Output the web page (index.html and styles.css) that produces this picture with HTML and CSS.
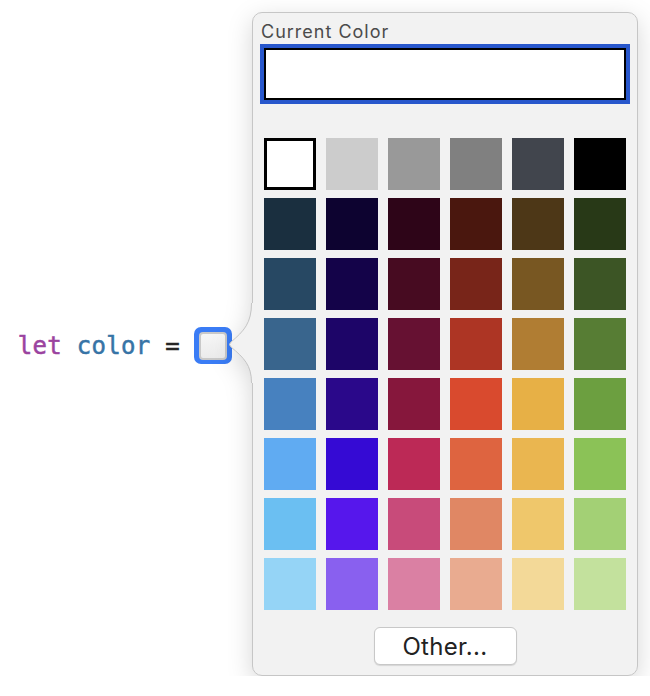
FILE: index.html
```html
<!DOCTYPE html>
<html>
<head>
<meta charset="utf-8">
<link rel="stylesheet" href="styles.css">
</head>
<body>
<div class="stage">
  <div class="code-line">
    <span class="code"><span class="kw">let</span> <span class="ident">color</span> <span class="op">=</span></span>
    <span class="literal"><span class="literal-inner"></span></span>
  </div>
  <div class="popover">
    <svg class="arrow" width="26" height="80" viewBox="0 0 26 80">
      <path d="M24 0 L24 0 C24 20 16 28 3 39 Q0 41.5 3 44 C16 55 24 62 24 80 L26 80 L26 0 Z" fill="#f2f2f2"/>
      <path d="M23.5 0 C23.5 20 16 28 3 39 Q0 41.5 3 44 C16 55 23.5 62 23.5 80" fill="none" stroke="#c4c4c4" stroke-width="1"/>
    </svg>
    <div class="title">Current Color</div>
    <div class="well"><div class="well-inner"></div></div>
    <div class="grid">
      <div class="sw selected" style="background:#ffffff"></div>
      <div class="sw" style="background:#cccccc"></div>
      <div class="sw" style="background:#999999"></div>
      <div class="sw" style="background:#808080"></div>
      <div class="sw" style="background:#41454d"></div>
      <div class="sw" style="background:#000000"></div>

      <div class="sw" style="background:#1a2f3f"></div>
      <div class="sw" style="background:#0d0330"></div>
      <div class="sw" style="background:#2e0518"></div>
      <div class="sw" style="background:#4a170e"></div>
      <div class="sw" style="background:#4d3717"></div>
      <div class="sw" style="background:#283917"></div>

      <div class="sw" style="background:#274863"></div>
      <div class="sw" style="background:#140349"></div>
      <div class="sw" style="background:#470b21"></div>
      <div class="sw" style="background:#782519"></div>
      <div class="sw" style="background:#785722"></div>
      <div class="sw" style="background:#3c5525"></div>

      <div class="sw" style="background:#39658d"></div>
      <div class="sw" style="background:#1d0568"></div>
      <div class="sw" style="background:#661132"></div>
      <div class="sw" style="background:#ad3524"></div>
      <div class="sw" style="background:#b07d33"></div>
      <div class="sw" style="background:#577d34"></div>

      <div class="sw" style="background:#4781bf"></div>
      <div class="sw" style="background:#2a088a"></div>
      <div class="sw" style="background:#86173c"></div>
      <div class="sw" style="background:#d94a2e"></div>
      <div class="sw" style="background:#e7b046"></div>
      <div class="sw" style="background:#6c9f40"></div>

      <div class="sw" style="background:#60abf2"></div>
      <div class="sw" style="background:#350ad4"></div>
      <div class="sw" style="background:#bc2956"></div>
      <div class="sw" style="background:#de6440"></div>
      <div class="sw" style="background:#eab650"></div>
      <div class="sw" style="background:#8bc257"></div>

      <div class="sw" style="background:#6bbff2"></div>
      <div class="sw" style="background:#5617ec"></div>
      <div class="sw" style="background:#c84b7a"></div>
      <div class="sw" style="background:#e08764"></div>
      <div class="sw" style="background:#efc76b"></div>
      <div class="sw" style="background:#a3d075"></div>

      <div class="sw" style="background:#95d4f6"></div>
      <div class="sw" style="background:#8960ef"></div>
      <div class="sw" style="background:#da80a3"></div>
      <div class="sw" style="background:#e9ab90"></div>
      <div class="sw" style="background:#f3d998"></div>
      <div class="sw" style="background:#c3e19d"></div>
    </div>
    <div class="footer"><button class="other">Other...</button></div>
  </div>
</div>
</body>
</html>
```

FILE: styles.css
```css
html, body {
  margin: 0;
  padding: 0;
  background: #ffffff;
}

.stage {
  display: flex;
  align-items: flex-start;
  padding: 11px 0 0 18px;
}

.code-line {
  display: flex;
  align-items: center;
  justify-content: flex-end;
  gap: 14px;
  width: 214px;
  margin-top: 316px;
  height: 37px;
}

.code {
  font-family: "DejaVu Sans Mono", "Liberation Mono", monospace;
  font-size: 24px;
  letter-spacing: 0.3px;
  color: #262626;
  white-space: pre;
  -webkit-text-stroke: 0.5px currentColor;
}

.kw { color: #9b439f; }
.ident { color: #3774a6; }
.op { color: #262626; }

.literal {
  box-sizing: border-box;
  width: 38px;
  height: 37px;
  border-radius: 7px;
  background: #3a7cf5;
  display: flex;
  align-items: center;
  justify-content: center;
  flex-shrink: 0;
}

.literal-inner {
  box-sizing: border-box;
  width: 28px;
  height: 28px;
  border-radius: 4px;
  border: 2px solid #c9c9c9;
  background: linear-gradient(#f6f6f6, #ececec);
}

.popover {
  position: relative;
  margin-left: 20px;
  margin-top: 1px;
  width: 362px;
  padding: 0 11px 10px 11px;
  background: #f2f2f2;
  border: 1px solid #c6c6c6;
  border-radius: 10px;
  filter: drop-shadow(0 7px 12px rgba(0, 0, 0, 0.16));
  font-family: "Inter", "Liberation Sans", sans-serif;
}

.arrow {
  position: absolute;
  left: -25px;
  top: 290px;
}

.title {
  font-size: 18px;
  letter-spacing: 1px;
  line-height: 20px;
  color: #4b4b4b;
  padding-top: 9px;
  margin-left: -3px;
}

.well {
  box-sizing: border-box;
  margin: 2px -4px 0 -4px;
  height: 60px;
  border: 4px solid #2857cc;
}

.well-inner {
  box-sizing: border-box;
  height: 100%;
  border: 2px solid #000000;
  background: #ffffff;
}

.grid {
  display: grid;
  grid-template-columns: repeat(6, 52px);
  column-gap: 10px;
  row-gap: 8px;
  margin-top: 34px;
}

.sw {
  box-sizing: border-box;
  width: 52px;
  height: 52px;
}

.sw.selected {
  border: 3px solid #000000;
}

.footer {
  display: flex;
  justify-content: center;
  margin-top: 17px;
}

.other {
  box-sizing: border-box;
  width: 143px;
  height: 38px;
  background: #ffffff;
  border: 1px solid #c8c8c8;
  border-radius: 6px;
  box-shadow: 0 1px 1px rgba(0, 0, 0, 0.12);
  font-family: "Inter", "Liberation Sans", sans-serif;
  font-size: 24px;
  letter-spacing: 0.3px;
  color: #222222;
  padding: 0;
}
```
